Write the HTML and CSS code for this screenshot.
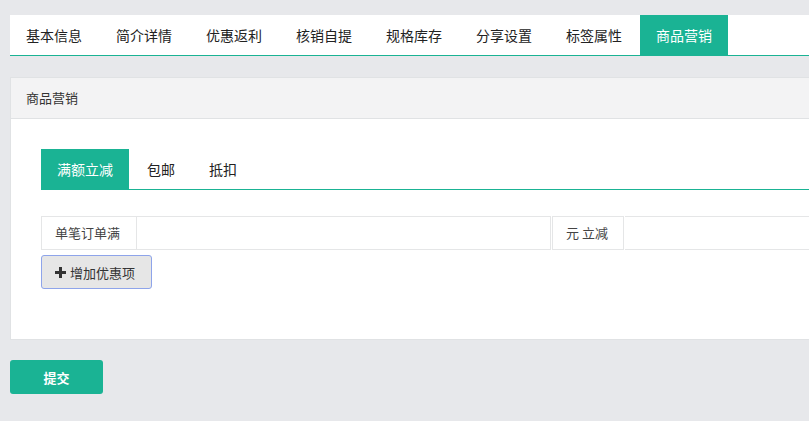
FILE: index.html
```html
<!DOCTYPE html>
<html lang="zh">
<head>
<meta charset="utf-8">
<title>商品营销</title>
<link rel="stylesheet" href="styles.css">
</head>
<body>
<div class="page">
  <div class="tabs">
    <div class="tab">基本信息</div>
    <div class="tab">简介详情</div>
    <div class="tab">优惠返利</div>
    <div class="tab">核销自提</div>
    <div class="tab">规格库存</div>
    <div class="tab">分享设置</div>
    <div class="tab">标签属性</div>
    <div class="tab active">商品营销</div>
  </div>

  <div class="panel">
    <div class="panel-head">商品营销</div>
    <div class="panel-body">
      <div class="subtabs">
        <div class="subtab active">满额立减</div>
        <div class="subtab">包邮</div>
        <div class="subtab">抵扣</div>
      </div>
      <div class="input-group">
        <div class="addon label">单笔订单满</div>
        <div class="field wide"></div>
        <div class="addon unit">元 立减</div>
        <div class="field rest"></div>
      </div>
      <button class="add-btn" type="button">
        <svg class="plus" width="11" height="11" viewBox="0 0 11 11"><path d="M4 0h3v4h4v3H7v4H4V7H0V4h4z" fill="#333"/></svg>
        <span>增加优惠项</span>
      </button>
    </div>
  </div>

  <button class="submit" type="button">提交</button>
</div>
</body>
</html>
```

FILE: styles.css
```css
html, body {
  margin: 0;
  padding: 0;
  background: #e7e8eb;
  overflow: hidden;
}
body {
  font-family: "Noto Sans CJK SC", "Noto Sans", sans-serif;
  color: #333;
}
.page {
  width: 860px;
  padding: 15px 0 0 10px;
}
.tabs {
  display: flex;
  gap: 2px;
  background: #fff;
  border-bottom: 1px solid #1ab394;
  height: 41px;
  box-sizing: border-box;
}
.tab {
  width: 88px;
  height: 40px;
  line-height: 40px;
  text-align: center;
  font-size: 14px;
  color: #222;
}
.tab.active {
  background: #1ab394;
  color: #fff;
}
.panel {
  margin-top: 21px;
  background: #fff;
  border: 1px solid #e0e2e4;
}
.panel-head {
  height: 40px;
  line-height: 40px;
  background: #f3f3f4;
  border-bottom: 1px solid #e0e2e4;
  padding-left: 15px;
  font-size: 13px;
  color: #333;
}
.panel-body {
  padding: 30px 30px 50px 30px;
}
.subtabs {
  display: flex;
  gap: 2px;
  border-bottom: 1px solid #1ab394;
  height: 41px;
  box-sizing: border-box;
}
.subtab {
  height: 40px;
  line-height: 40px;
  padding: 0 16px;
  font-size: 14px;
  color: #222;
}
.subtab.active {
  background: #1ab394;
  color: #fff;
}
.input-group {
  display: flex;
  margin-top: 26px;
  height: 34px;
}
.addon {
  box-sizing: border-box;
  height: 34px;
  line-height: 32px;
  border: 1px solid #e5e6e7;
  font-size: 13px;
  color: #444;
  background: #fff;
}
.label {
  width: 96px;
  padding-left: 13px;
}
.unit {
  width: 72px;
  padding-left: 13px;
  margin-left: 1px;
}
.field {
  box-sizing: border-box;
  height: 34px;
  border: 1px solid #e5e6e7;
  border-left: none;
}
.wide {
  width: 414px;
}
.rest {
  flex: 1;
  border-left: none;
  margin-left: 1px;
}
.add-btn {
  display: flex;
  align-items: center;
  gap: 4px;
  margin-top: 5px;
  width: 111px;
  height: 34px;
  box-sizing: border-box;
  padding: 0 0 0 13px;
  background: #e6e6e6;
  border: 1px solid #8ea4ea;
  border-radius: 3px;
  font-family: inherit;
  font-size: 13px;
  color: #333;
}
.submit {
  display: block;
  margin-top: 20px;
  width: 93px;
  height: 34px;
  border: none;
  border-radius: 3px;
  background: #1ab394;
  color: #fff;
  font-family: inherit;
  font-size: 13px;
  font-weight: bold;
}
```
